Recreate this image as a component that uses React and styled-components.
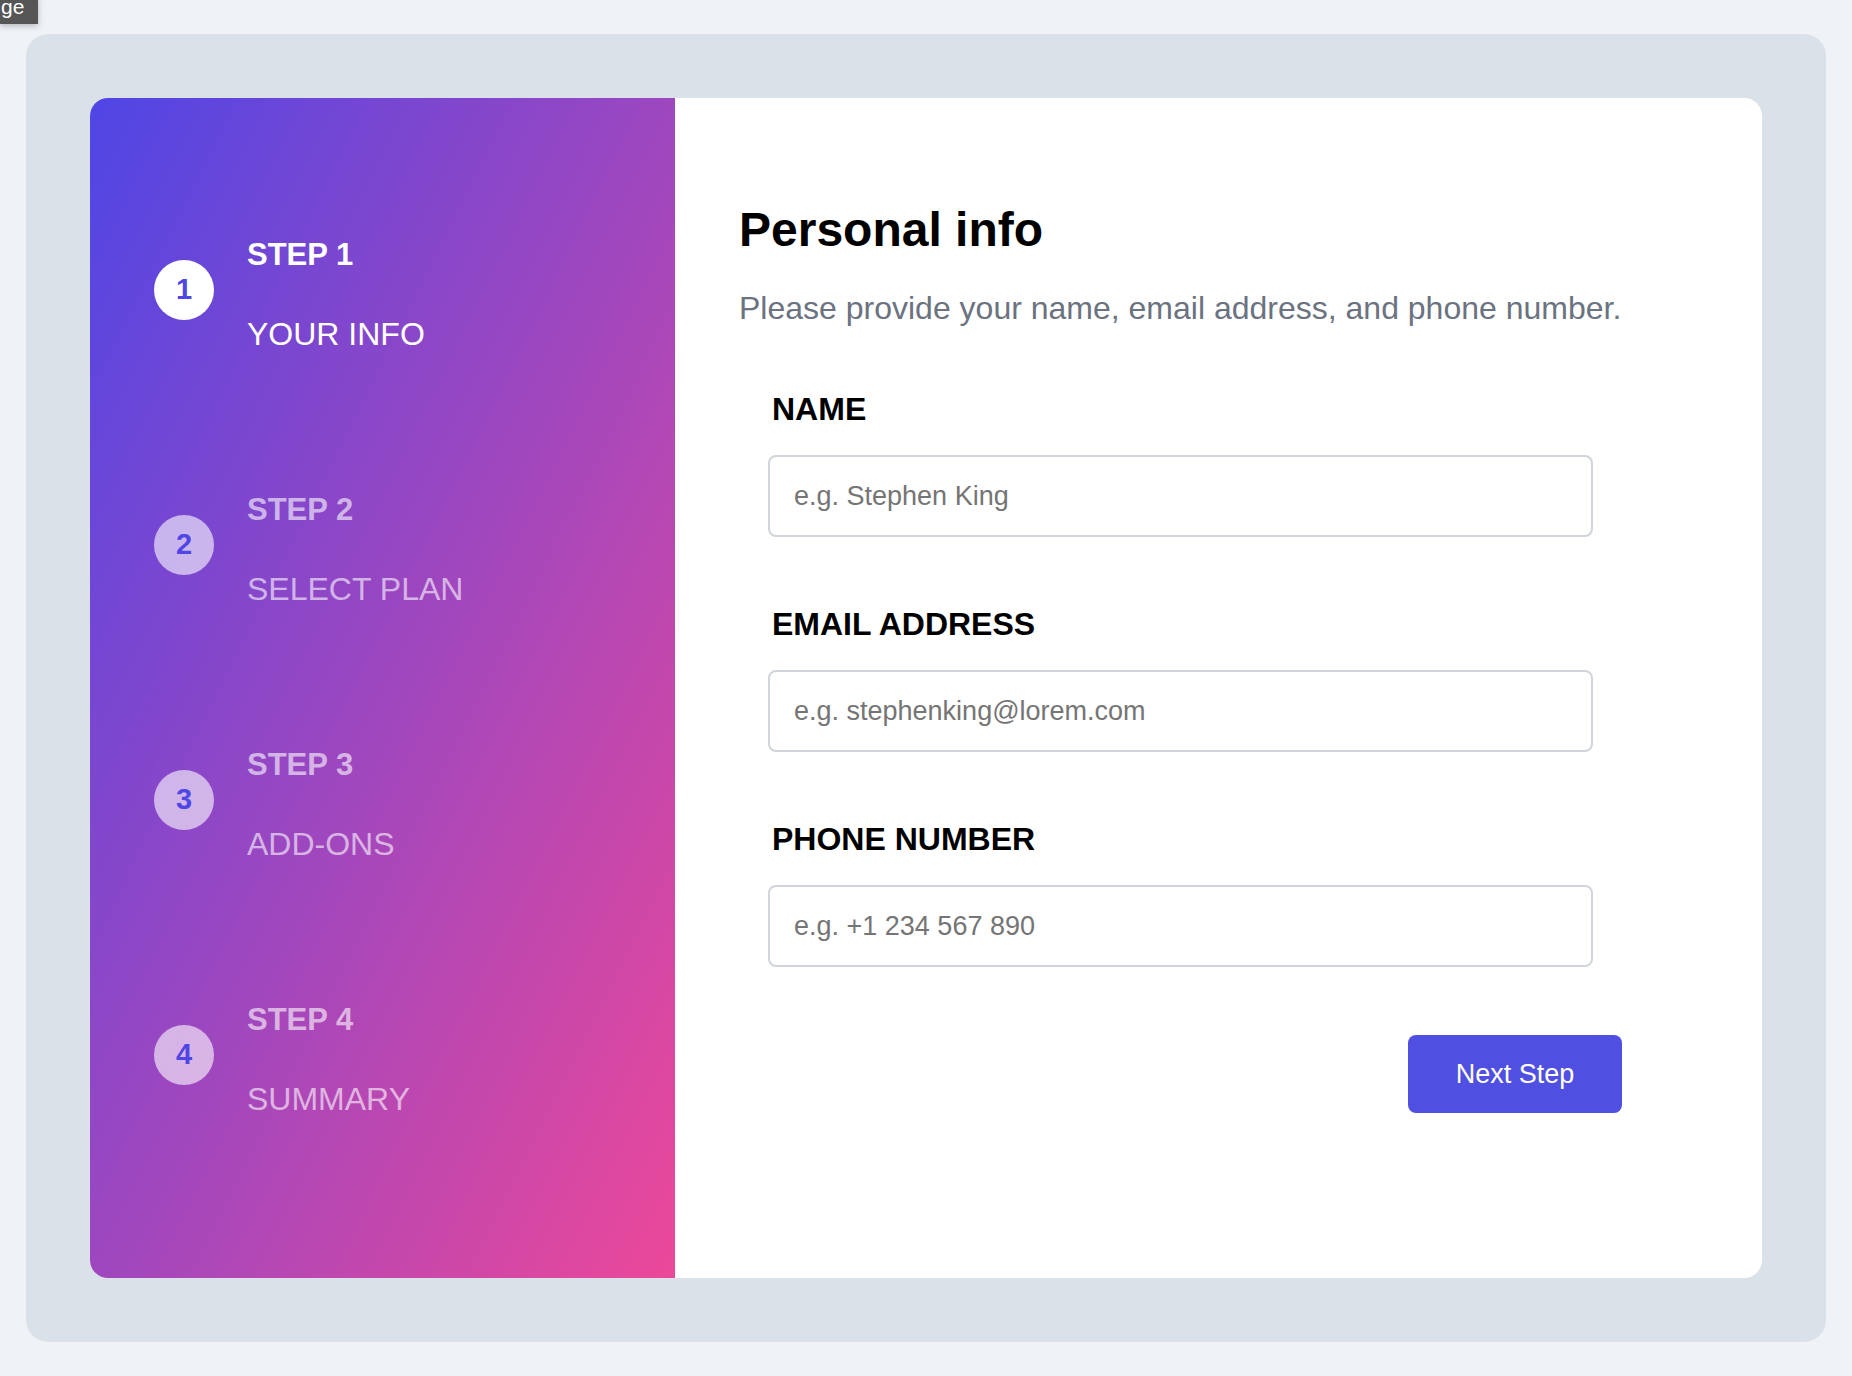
import React from 'react';
import styled, {createGlobalStyle} from "styled-components";

const GlobalStyle = createGlobalStyle`
  html, body {
    margin: 0;
    padding: 0;
    background: #eff3f7;
    font-family: "Liberation Sans", Arial, sans-serif;
  }
  * {
    box-sizing: border-box;
  }
`;

const Page = styled.div`
  position: relative;
  min-height: 100vh;
  display: flex;
  justify-content: center;
  align-items: center;
`;

const Tag = styled.div`
  position: absolute;
  top: -4px;
  left: 0;
  width: 38px;
  height: 28px;
  padding-left: 1px;
  background: #565656;
  color: #fff;
  font-size: 21px;
  line-height: 22px;
  box-shadow: 0 2px 6px rgba(0, 0, 0, .25);
  overflow: hidden;
`;

const Frame = styled.div`
  width: 1800px;
  height: 1308px;
  padding: 64px;
  background: #dbe1e9;
  border-radius: 22px;
`;

const Card = styled.div`
  display: flex;
  height: 100%;
  background: #fff;
  border-radius: 18px;
  overflow: hidden;
`;

const Sidebar = styled.div`
  width: 585px;
  flex-shrink: 0;
  display: flex;
  flex-direction: column;
  gap: 138px;
  padding: 138px 0 0 64px;
  background: linear-gradient(to bottom right, #4f46e5, #ec4899);
`;

const Step = styled.div`
  display: flex;
  align-items: center;
  gap: 33px;
`;

const Circle = styled.div`
  width: 60px;
  height: 60px;
  margin-bottom: 10px;
  border-radius: 50%;
  display: flex;
  justify-content: center;
  align-items: center;
  background: ${p => p.active ? "#fff" : "rgba(255, 255, 255, .6)"};
  color: #4f46e5;
  font-size: 29px;
  font-weight: bold;
`;

const StepText = styled.div`
  display: flex;
  flex-direction: column;
  gap: 41px;
  color: ${p => p.active ? "#fff" : "rgba(255, 255, 255, .6)"};
  line-height: 38px;
`;

const StepLabel = styled.span`
  font-size: 31px;
  font-weight: bold;
`;

const StepName = styled.span`
  font-size: 32px;
`;

const Content = styled.div`
  flex: 1;
  padding: 103px 0 0 64px;
`;

const Inner = styled.div`
  width: 883px;
`;

const Title = styled.h1`
  margin: 0;
  font-size: 48px;
  line-height: 58px;
  font-weight: bold;
  color: #000;
`;

const Subtitle = styled.p`
  margin: 31px 0 0;
  font-size: 32px;
  line-height: 36px;
  color: #6b7280;
  white-space: nowrap;
`;

const Form = styled.div`
  margin-top: 64px;
  padding: 0 29px;
  display: flex;
  flex-direction: column;
  gap: 68px;
`;

const Field = styled.div`
  display: flex;
  flex-direction: column;
  gap: 27px;
`;

const Label = styled.label`
  padding-left: 4px;
  font-size: 32px;
  line-height: 38px;
  font-weight: bold;
  color: #000;
`;

const Input = styled.input`
  height: 82px;
  width: 100%;
  padding: 0 24px;
  border: 2px solid #d1d5db;
  border-radius: 8px;
  font-family: "Liberation Sans", Arial, sans-serif;
  font-size: 27px;
  outline: none;
  color: #111;

  ::placeholder {
    color: #737373;
  }
`;

const Footer = styled.div`
  margin-top: 68px;
  display: flex;
  justify-content: flex-end;
`;

const Button = styled.button`
  width: 214px;
  height: 78px;
  border: none;
  border-radius: 8px;
  background: #4f4fe1;
  color: #fff;
  font-family: "Liberation Sans", Arial, sans-serif;
  font-size: 27px;
  cursor: pointer;
`;

const steps = [
    {n: 1, name: "YOUR INFO"},
    {n: 2, name: "SELECT PLAN"},
    {n: 3, name: "ADD-ONS"},
    {n: 4, name: "SUMMARY"},
]

const fields = [
    {label: "NAME", placeholder: "e.g. Stephen King", type: "text"},
    {label: "EMAIL ADDRESS", placeholder: "e.g. stephenking@lorem.com", type: "email"},
    {label: "PHONE NUMBER", placeholder: "e.g. +1 234 567 890", type: "tel"},
]

const App = () => {
    return (
        <Page>
            <GlobalStyle/>
            <Tag>ge</Tag>
            <Frame>
                <Card>
                    <Sidebar>
                        {steps.map(s => (
                            <Step key={s.n}>
                                <Circle active={s.n === 1}>{s.n}</Circle>
                                <StepText active={s.n === 1}>
                                    <StepLabel>STEP {s.n}</StepLabel>
                                    <StepName>{s.name}</StepName>
                                </StepText>
                            </Step>
                        ))}
                    </Sidebar>
                    <Content>
                        <Inner>
                            <Title>Personal info</Title>
                            <Subtitle>Please provide your name, email address, and phone number.</Subtitle>
                            <Form>
                                {fields.map(f => (
                                    <Field key={f.label}>
                                        <Label>{f.label}</Label>
                                        <Input type={f.type} placeholder={f.placeholder}/>
                                    </Field>
                                ))}
                            </Form>
                            <Footer>
                                <Button>Next Step</Button>
                            </Footer>
                        </Inner>
                    </Content>
                </Card>
            </Frame>
        </Page>
    );
};

export default App;
